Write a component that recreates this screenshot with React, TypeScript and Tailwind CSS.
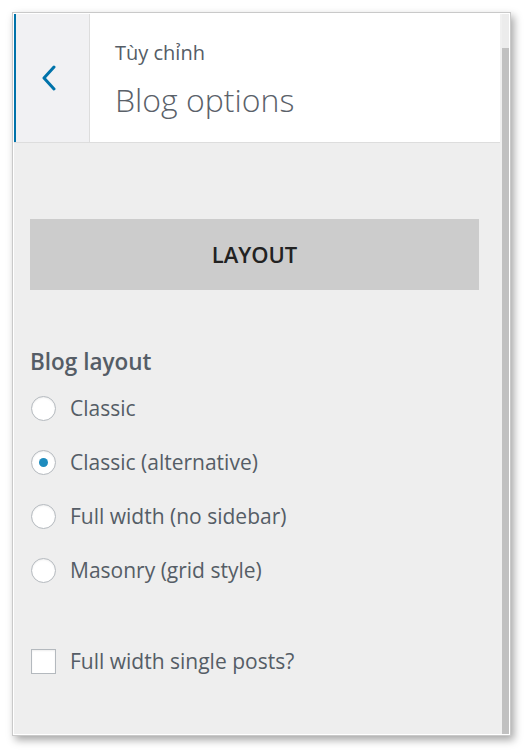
const options = [
  { label: "Classic", checked: false },
  { label: "Classic (alternative)", checked: true },
  { label: "Full width (no sidebar)", checked: false },
  { label: "Masonry (grid style)", checked: false },
];

function Radio({ checked }: { checked: boolean }) {
  return (
    <span className="ml-[1px] flex h-[25px] w-[25px] shrink-0 items-center justify-center rounded-full border border-[#b4b9be] bg-white shadow-[inset_0_1px_2px_rgba(0,0,0,0.07)]">
      {checked && <span className="h-[9px] w-[9px] rounded-full bg-[#1e8cbe]" />}
    </span>
  );
}

export default function App() {
  return (
    <div className="min-h-[750px] bg-white pl-[12px] pt-[12px] font-['Open_Sans',sans-serif]">
      <div className="flex h-[724px] w-[499px] border border-[#c9c9c9] bg-white p-[1px] shadow-[3px_4px_8px_rgba(0,0,0,0.35)]">
        {/* main panel */}
        <div className="flex min-w-0 flex-1 flex-col bg-[#eeeeee]">
          <div className="flex h-[129px] shrink-0 border-b border-[#dddddd] bg-white">
            <div className="flex w-[76px] shrink-0 items-center border-l-[2px] border-r border-l-[#0073aa] border-r-[#dddddd] bg-[#f1f1f3] pl-[25px]">
              <svg width="16" height="26" viewBox="0 0 16 26">
                <polyline
                  points="13,2 3,13 13,24"
                  fill="none"
                  stroke="#0073aa"
                  strokeWidth="3"
                  strokeLinecap="round"
                  strokeLinejoin="round"
                />
              </svg>
            </div>
            <div className="flex flex-col pl-[25px] pt-[26px]">
              <span className="text-[20px] leading-[26px] text-[#555d66]">Tùy chỉnh</span>
              <span className="mt-[14px] text-[32px] font-light leading-[40px] text-[#5a6169]">
                Blog options
              </span>
            </div>
          </div>

          <div className="pl-[16px] pr-[21px] pt-[76px]">
            <div className="flex h-[71px] items-center justify-center bg-[#cccccc] text-[22px] font-semibold text-[#222222]">
              LAYOUT
            </div>

            <div className="mt-[57px] text-[22.5px] font-semibold leading-[30px] text-[#555d66]">
              Blog layout
            </div>
            <div className="mt-[17px] flex flex-col gap-[26px]">
              {options.map((o) => (
                <label key={o.label} className="flex h-[28px] items-center gap-[14px]">
                  <Radio checked={o.checked} />
                  <span className="text-[21px] leading-[28px] text-[#555d66]">{o.label}</span>
                </label>
              ))}
            </div>

            <label className="mt-[63px] flex h-[28px] items-center gap-[14px]">
              <span className="ml-[1px] h-[25px] w-[25px] shrink-0 border border-[#b4b9be] bg-white shadow-[inset_0_1px_2px_rgba(0,0,0,0.07)]" />
              <span className="text-[21px] leading-[28px] text-[#555d66]">Full width single posts?</span>
            </label>
          </div>
        </div>

        {/* scrollbar */}
        <div className="flex w-[9px] shrink-0 flex-col bg-[#f0f0f0] pl-[2px]">
          <div className="h-[34px] bg-[#ececec]" />
          <div className="flex-1 bg-[#c1c1c1]" />
        </div>
      </div>
    </div>
  );
}
